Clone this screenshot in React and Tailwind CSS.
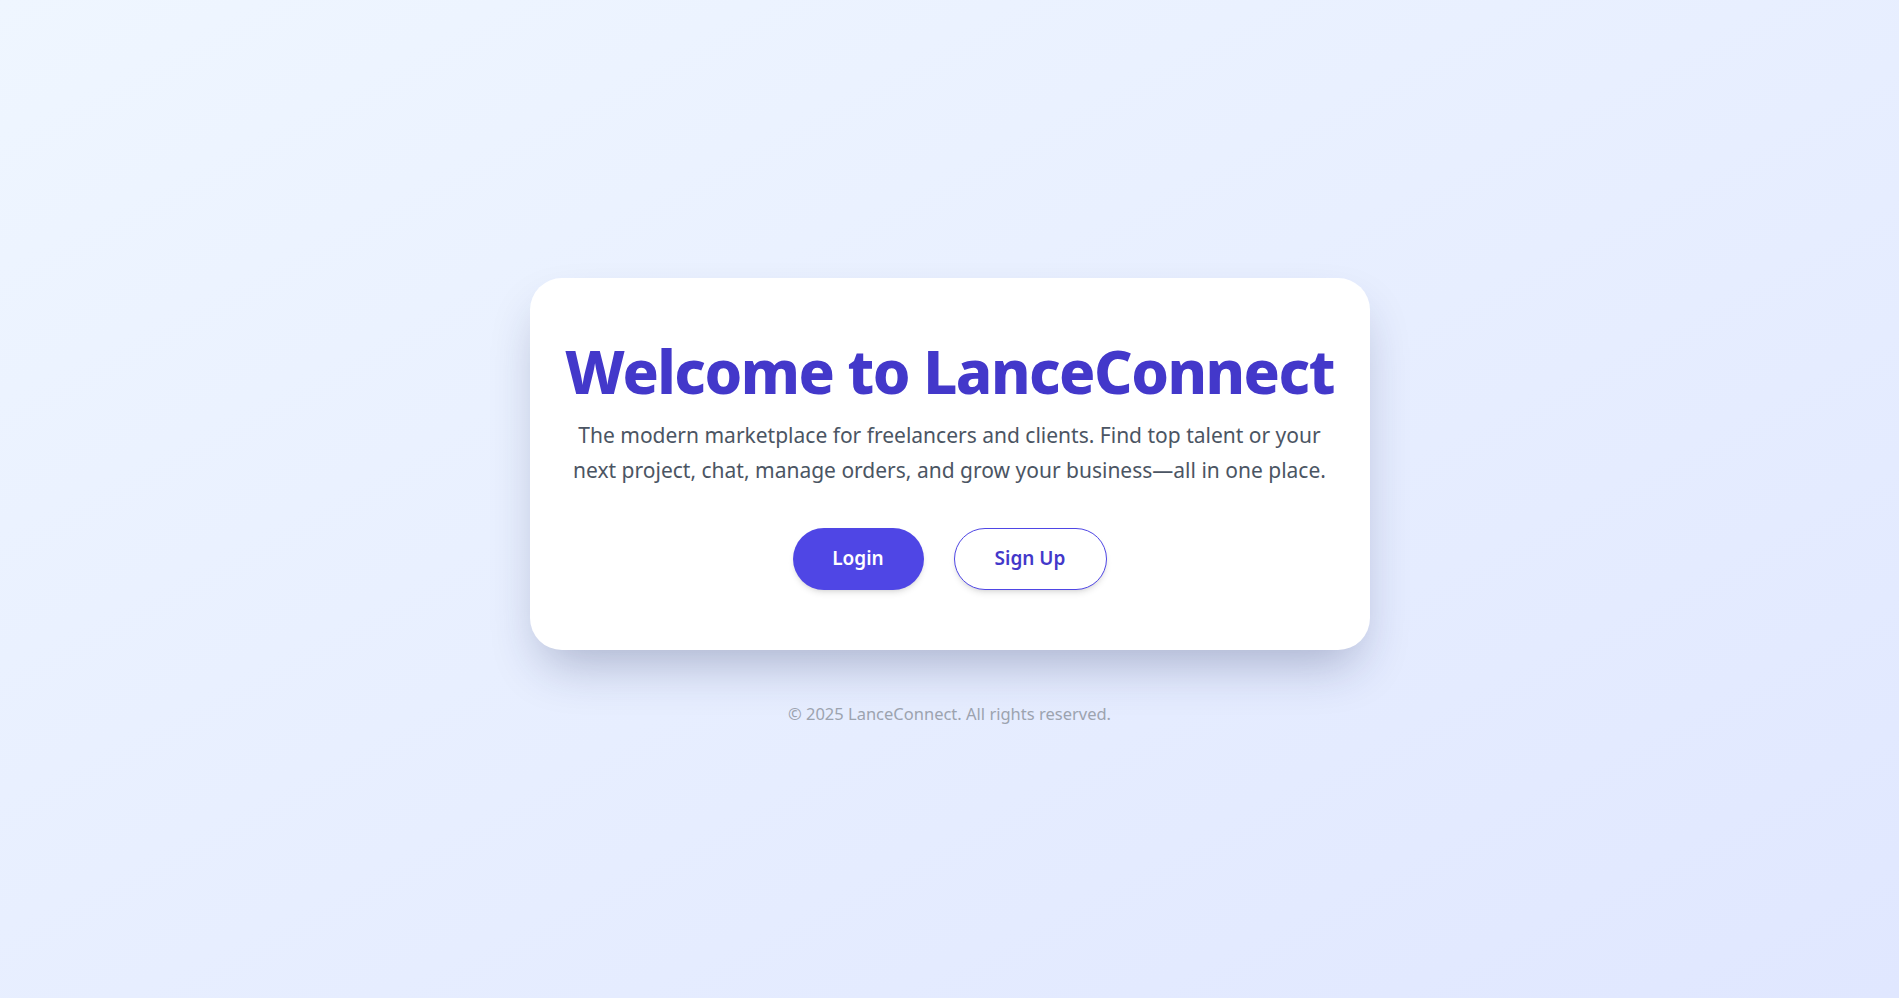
export default function App() {
  return (
    <div
      className="min-h-screen w-full pt-[6px] flex flex-col items-center justify-center bg-gradient-to-br from-[#eff6ff] to-[#e0e7ff]"
      style={{ fontFamily: '"Noto Sans", "Open Sans", sans-serif' }}
    >
      {/* Card */}
      <div className="w-[840px] bg-white rounded-[32px] shadow-[0_25px_50px_-12px_rgba(30,41,90,0.3)] px-8 pt-[63px] pb-[60px] flex flex-col items-center text-center">
        <h1 className="text-[60px] leading-none font-extrabold tracking-tight text-[#4338ca]">
          Welcome to LanceConnect
        </h1>
        <p className="mt-[17px] text-[21px] leading-[35px] text-[#4b5563] max-w-[765px]">
          The modern marketplace for freelancers and clients. Find top talent or your next project, chat,
          manage orders, and grow your business—all in one place.
        </p>
        <div className="mt-10 flex items-center gap-[30px]">
          <button className="h-[62px] w-[131px] rounded-full bg-[#4f46e5] text-white text-[19px] font-semibold shadow-md">
            Login
          </button>
          <button className="h-[62px] w-[153px] rounded-full border border-[#4f46e5] bg-white text-[#4338ca] text-[19px] font-semibold shadow-md">
            Sign Up
          </button>
        </div>
      </div>

      {/* Footer */}
      <p className="mt-[52px] text-[16.5px] text-[#9ca3af]">© 2025 LanceConnect. All rights reserved.</p>
    </div>
  )
}
